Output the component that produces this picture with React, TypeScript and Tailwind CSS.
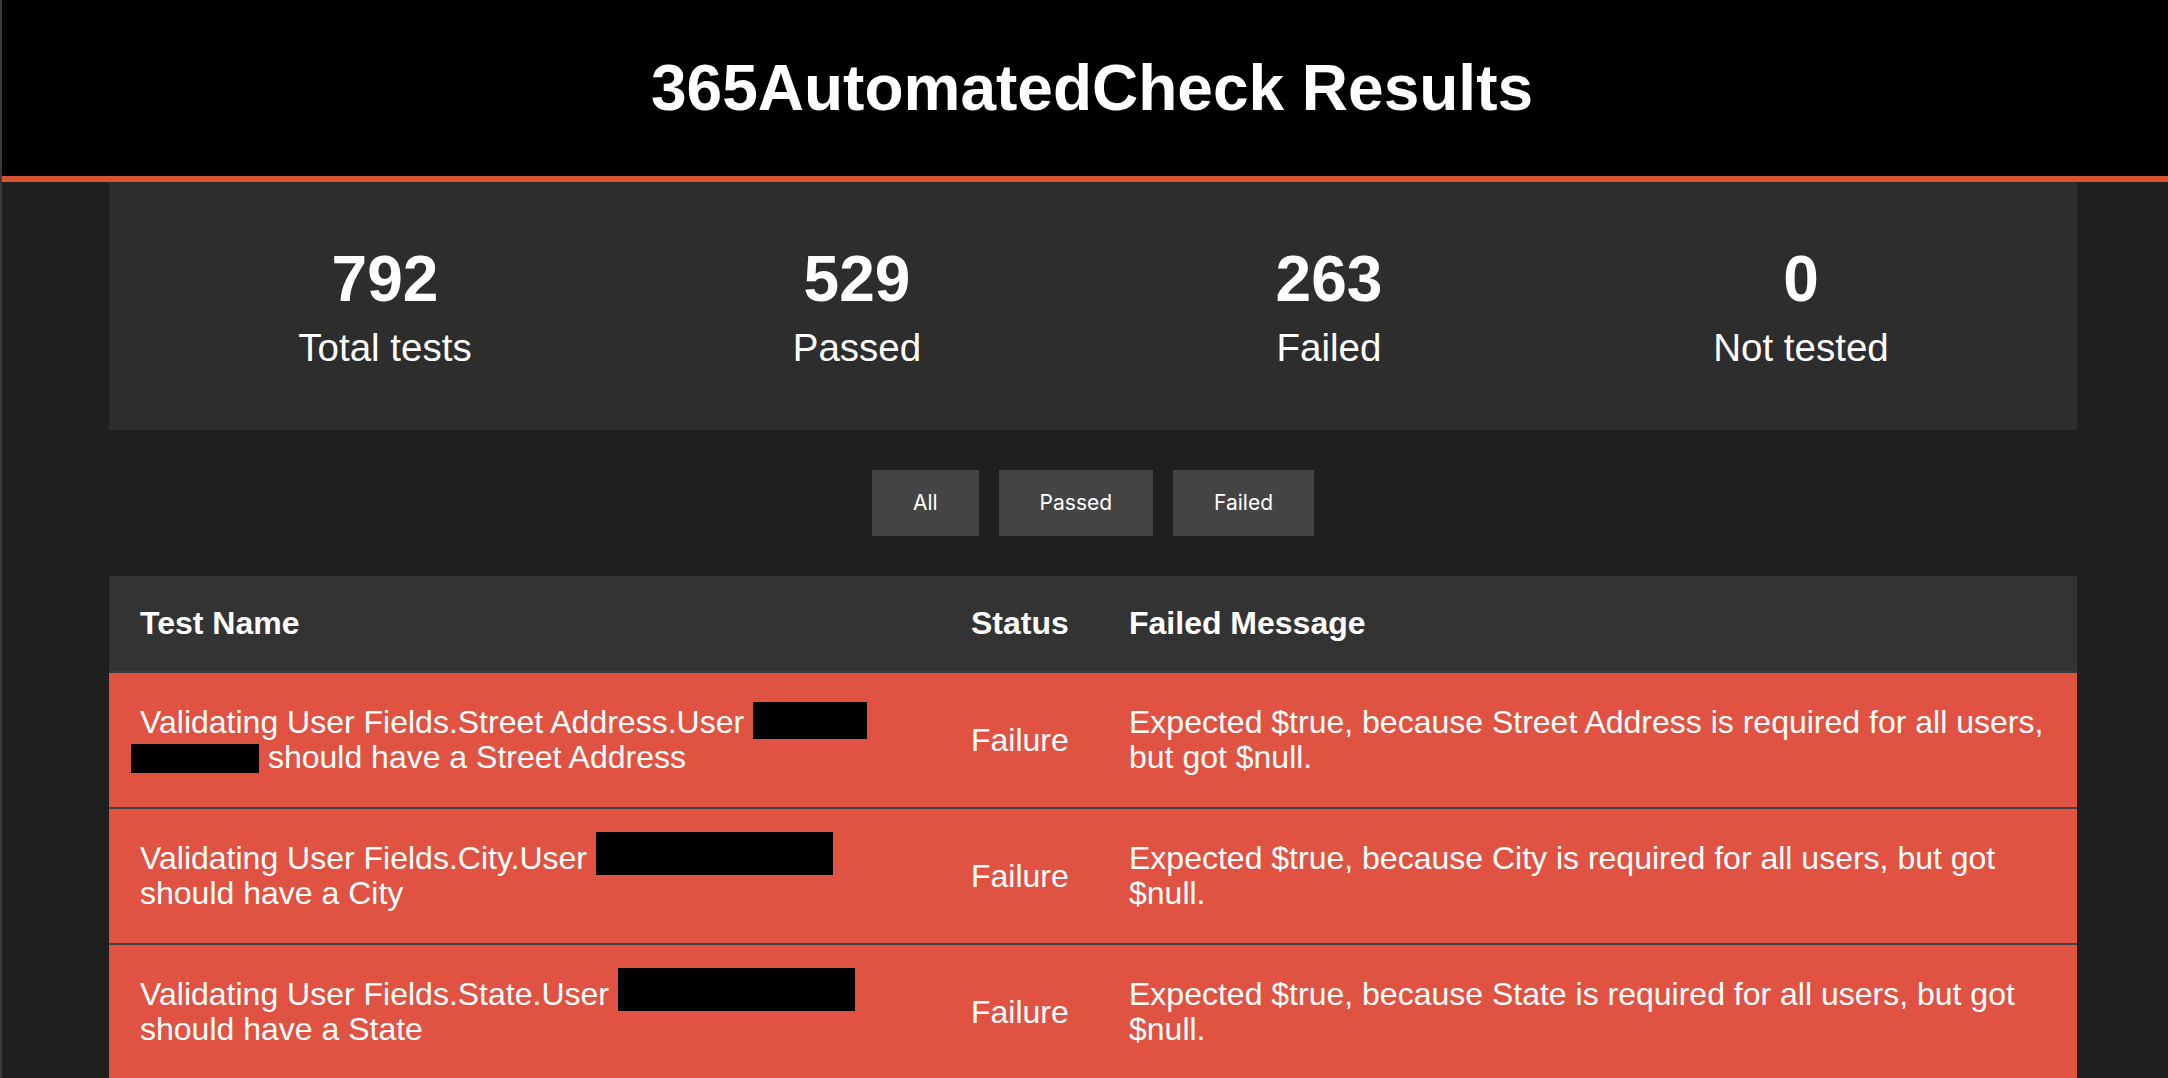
const stats = [
  { value: 792, label: 'Total tests' },
  { value: 529, label: 'Passed' },
  { value: 263, label: 'Failed' },
  { value: 0, label: 'Not tested' },
];

const filters = ['All', 'Passed', 'Failed'];

const rows = [
  {
    field: 'City',
    message: 'Expected $true, because City is required for all users, but got $null.',
  },
  {
    field: 'State',
    message: 'Expected $true, because State is required for all users, but got $null.',
  },
  {
    field: 'Postal Code',
    message: 'Expected $true, because Postal Code is required for all users, but got $null.',
  },
];

function Redacted({ className }: { className: string }) {
  return <span className={`inline-block bg-black ${className}`} />;
}

export default function App() {
  return (
    <div className="min-h-screen bg-[#1f1f1f] border-l-2 border-[#3a3a3a] text-white font-['Liberation_Sans',Arial,sans-serif]">
      <header className="h-[182px] bg-black border-b-[6px] border-[#d75432] flex items-center justify-center pl-[14px]">
        <h1 className="text-[64px] font-bold leading-none">365AutomatedCheck Results</h1>
      </header>

      <main className="ml-[107px] w-[1968px]">
        <section className="bg-[#2d2d2d] px-[40px] pt-[60px] pb-[61px] grid grid-cols-4 text-center">
          {stats.map((s) => (
            <div key={s.label}>
              <div className="text-[64px] font-bold leading-[74px]">{s.value}</div>
              <div className="mt-[10px] text-[38.5px] leading-[43px]">{s.label}</div>
            </div>
          ))}
        </section>

        <div className="flex justify-center gap-[20px] pt-[40px] pb-[40px]">
          {filters.map((f) => (
            <button
              key={f}
              className="h-[66px] px-[41px] bg-[#444444] text-white text-[21px] font-['Inter',sans-serif]"
            >
              {f}
            </button>
          ))}
        </div>

        <table className="w-full table-fixed border-collapse text-[32px] leading-[35px] text-left">
          <colgroup>
            <col className="w-[831px]" />
            <col className="w-[158px]" />
            <col className="w-[979px]" />
          </colgroup>
          <thead>
            <tr className="bg-[#333333] border-b-2 border-[#3b3b3b]">
              <th className="px-[31px] py-[30px] font-bold">Test Name</th>
              <th className="px-[31px] py-[30px] font-bold">Status</th>
              <th className="px-[31px] py-[30px] font-bold">Failed Message</th>
            </tr>
          </thead>
          <tbody>
            <tr className="bg-[#e05343] border-b-2 border-[#444444]">
              <td className="px-[31px] py-[32px]">
                Validating User Fields.Street Address.User{' '}
                <Redacted className="-mt-[6px] w-[114px] h-[37px] align-[-6px]" />
                <br />
                <Redacted className="-ml-[9px] w-[128px] h-[29px] align-[-5px]" /> should have a Street Address
              </td>
              <td className="px-[31px] py-[32px]">Failure</td>
              <td className="px-[31px] py-[32px]">
                Expected $true, because Street Address is required for all users, but got $null.
              </td>
            </tr>
            {rows.map((r) => (
              <tr key={r.field} className="bg-[#e05343] border-b-2 border-[#444444]">
                <td className="px-[31px] py-[32px]">
                  Validating User Fields.{r.field}.User{' '}
                  <Redacted className="-mt-[9px] w-[237px] h-[43px] align-[-6px]" />
                  <br />
                  should have a {r.field}
                </td>
                <td className="px-[31px] py-[32px]">Failure</td>
                <td className="px-[31px] py-[32px]">{r.message}</td>
              </tr>
            ))}
          </tbody>
        </table>
      </main>
    </div>
  );
}
